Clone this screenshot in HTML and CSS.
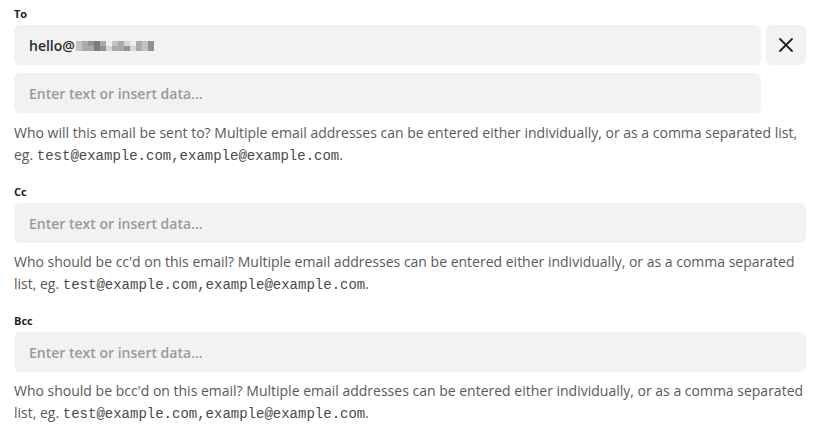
FILE: index.html
```html
<!DOCTYPE html>
<html>
<head>
<meta charset="utf-8">
<link rel="stylesheet" href="styles.css">
</head>
<body>
<div class="form">
  <div class="field">
    <div class="label">To</div>
    <div class="row">
      <div class="input filled">hello@<span class="mosaic"><i class="s2"></i><i class="s3"></i><i class="s4"></i><i class="s5"></i><i class="s3"></i><i class="s0"></i><i class="s2"></i><i class="s3"></i><i class="s1"></i><i class="s0"></i><i class="s3"></i><i class="s2"></i><i class="s4"></i><i class="s2"></i><i class="s3"></i><i class="s3"></i><i class="s5"></i><i class="s4"></i><i class="s1"></i><i class="s3"></i><i class="s3"></i><i class="s4"></i><i class="s1"></i><i class="s3"></i><i class="s2"></i><i class="s4"></i></span></div>
      <button class="remove" type="button" aria-label="Remove">
        <svg width="16" height="16" viewBox="0 0 16 16"><path d="M2 2L14 14M14 2L2 14" stroke="#1f1f1f" stroke-width="1.8" stroke-linecap="round" fill="none"/></svg>
      </button>
    </div>
    <div class="row">
      <div class="input">Enter text or insert data...</div>
      <div class="spacer"></div>
    </div>
    <p class="help first">Who will this email be sent to? Multiple email addresses can be entered either individually, or as a comma separated list, eg. <code>test@example.com,example@example.com</code>.</p>
  </div>
  <div class="field">
    <div class="label">Cc</div>
    <div class="input">Enter text or insert data...</div>
    <p class="help">Who should be cc'd on this email? Multiple email addresses can be entered either individually, or as a comma separated list, eg. <code>test@example.com,example@example.com</code>.</p>
  </div>
  <div class="field">
    <div class="label">Bcc</div>
    <div class="input">Enter text or insert data...</div>
    <p class="help">Who should be bcc'd on this email? Multiple email addresses can be entered either individually, or as a comma separated list, eg. <code>test@example.com,example@example.com</code>.</p>
  </div>
</div>
</body>
</html>
```
FILE: styles.css
```css
html, body {
  margin: 0;
  padding: 0;
  background: #ffffff;
}
body {
  font-family: "Open Sans", "Liberation Sans", sans-serif;
}
.form {
  width: 792px;
  padding: 5px 0 0 14px;
}
.field {
  margin-bottom: 16px;
}
.label {
  font-size: 11px;
  font-weight: 700;
  line-height: 18px;
  color: #222222;
  margin-bottom: 2px;
}
.row {
  display: flex;
  gap: 5px;
  margin-bottom: 8px;
}
.row:last-of-type {
  margin-bottom: 0;
}
.input {
  flex: 1;
  height: 40px;
  box-sizing: border-box;
  background: #f2f2f2;
  border-radius: 6px;
  padding: 0 15px;
  display: flex;
  align-items: center;
  font-size: 14px;
  font-weight: 600;
  color: #9a9a9a;
}
.input.filled {
  color: #2b2b2b;
}
.remove, .spacer {
  width: 40px;
  height: 40px;
  flex: none;
}
.remove {
  border: 0;
  padding: 0;
  background: #f2f2f2;
  border-radius: 6px;
  display: flex;
  align-items: center;
  justify-content: center;
}
.mosaic {
  display: inline-grid;
  grid-template-columns: repeat(13, 6px);
  grid-auto-rows: 5px;
  margin-left: 1px;
  margin-top: 1px;
}
.mosaic i { display: block; }
.mosaic .s0 { background: #ececec; }
.mosaic .s1 { background: #d6d6d6; }
.mosaic .s2 { background: #c2c2c2; }
.mosaic .s3 { background: #aaaaaa; }
.mosaic .s4 { background: #929292; }
.mosaic .s5 { background: #7c7c7c; }
.help {
  margin: 8px 0 0;
  font-size: 14px;
  line-height: 22px;
  color: #5a5a5a;
}
.help.first {
  margin-top: 9px;
}
code {
  font-family: "Liberation Mono", "DejaVu Sans Mono", monospace;
  font-size: 14px;
  color: #4a4a4a;
  white-space: nowrap;
}
```
